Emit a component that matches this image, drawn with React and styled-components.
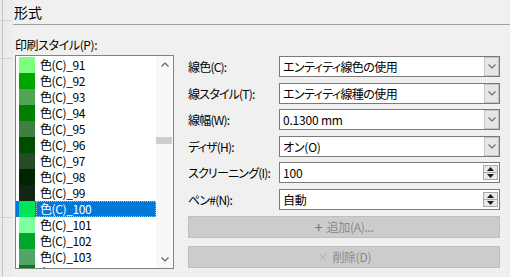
import React from 'react';
import styled, { createGlobalStyle } from 'styled-components';

const Global = createGlobalStyle`
  html, body { margin: 0; padding: 0; background: #f0f0f0; }
  body {
    font-family: "Noto Sans CJK JP", "Noto Sans", sans-serif;
    font-size: 12px;
    color: #000;
  }
  #root { width: 510px; height: 277px; overflow: hidden; }
`;

const Page = styled.div`
  display: flex;
  width: 510px;
  height: 277px;
  background: #f0f0f0;
  overflow: hidden;
  font-feature-settings: "palt";
`;

const Strip = styled.div`
  width: 13px;
  flex: none;
  background:
    linear-gradient(#c4c4c4, #c4c4c4) 2px 0 / 1px 100% no-repeat,
    linear-gradient(#d0d0d0, #d0d0d0) 0 20px / 12px 1px no-repeat,
    linear-gradient(#d0d0d0, #d0d0d0) 0 58px / 12px 1px no-repeat,
    linear-gradient(#d0d0d0, #d0d0d0) 0 217px / 12px 1px no-repeat,
    #ececec;
`;

const Main = styled.div`
  flex: 1;
  display: flex;
  flex-direction: column;
  min-width: 0;
`;

const Header = styled.div`
  height: 24px;
  line-height: 24px;
  font-size: 14px;
  padding-left: 1px;
  border-bottom: 1px solid #a0a0a0;
`;

const Body = styled.div`
  padding: 12px 0 0 2px;
  display: flex;
  flex-direction: column;
`;

const SectionLabel = styled.div`
  height: 16px;
  line-height: 16px;
  margin-bottom: 2px;
  letter-spacing: -0.4px;
`;

const Content = styled.div`
  display: flex;
  align-items: flex-start;
  gap: 14px;
`;

const ListBox = styled.div`
  width: 159px;
  height: 214px;
  box-sizing: border-box;
  border: 1px solid #828282;
  background: #fff;
  display: flex;
  overflow: hidden;
`;

const Items = styled.div`
  flex: 1;
  padding-top: 1px;
  overflow: hidden;
`;

const Item = styled.div`
  height: 16px;
  display: flex;
  align-items: stretch;
  background: ${p => (p.$selected ? '#0078d7' : 'transparent')};
  color: ${p => (p.$selected ? '#fff' : '#000')};
`;

const Swatch = styled.div`
  width: 16px;
  margin-left: 3px;
  flex: none;
`;

const ItemText = styled.div`
  flex: 1;
  margin-left: 1px;
  padding-left: 3px;
  line-height: 16px;
  letter-spacing: -0.4px;
  box-sizing: border-box;
  border: 1px dotted ${p => (p.$selected ? 'rgba(255,220,170,0.7)' : 'transparent')};
  display: flex;
  align-items: center;
`;

const ScrollBar = styled.div`
  width: 17px;
  flex: none;
  background: #f8f8f8;
  display: flex;
  flex-direction: column;
`;

const ScrollBtn = styled.div`
  height: 17px;
  display: flex;
  align-items: center;
  justify-content: center;
`;

const Track = styled.div`
  flex: 1;
`;

const Thumb = styled.div`
  height: 7px;
  margin: 64px 1px 0 0;
  background: #cdcdcd;
`;

const Form = styled.div`
  width: 312px;
  margin-top: 1px;
  display: flex;
  flex-direction: column;
  gap: 5.6px;
`;

const Row = styled.div`
  display: grid;
  grid-template-columns: 91px 1fr;
  align-items: center;
  height: 21px;
`;

const Label = styled.div`
  white-space: nowrap;
  letter-spacing: -0.8px;
`;

const Field = styled.div`
  height: 21px;
  box-sizing: border-box;
  border: 1px solid #7a7a7a;
  background: #fff;
  display: flex;
  align-items: stretch;
`;

const FieldText = styled.div`
  flex: 1;
  padding-left: 3px;
  display: flex;
  align-items: center;
  white-space: pre;
  letter-spacing: ${p => (p.$narrow ? '-0.6px' : '-0.2px')};
`;

const DropBtn = styled.div`
  width: 15px;
  box-sizing: border-box;
  border: 1px solid #c4c4c4;
  background: #e6e6e6;
  display: flex;
  align-items: center;
  justify-content: center;
`;

const SpinBox = styled.div`
  width: 15px;
  margin: 2px 1px 2px 0;
  box-sizing: border-box;
  border: 1px solid #a8a8a8;
  background: #e8e8e8;
  display: flex;
  flex-direction: column;
`;

const SpinHalf = styled.div`
  flex: 1;
  display: flex;
  align-items: center;
  justify-content: center;
  border-top: ${p => (p.$lower ? '1px solid #a8a8a8' : 'none')};
`;

const Buttons = styled.div`
  display: flex;
  flex-direction: column;
  gap: 8px;
  margin-top: 0.4px;
`;

const Button = styled.div`
  height: 22px;
  box-sizing: border-box;
  border: 1px solid #bfbfbf;
  background: #cccccc;
  color: #8a8a8a;
  letter-spacing: -0.3px;
  display: flex;
  align-items: center;
  justify-content: center;
  gap: 4px;
`;

const Glyph = styled.span`
  color: ${p => p.$color};
  font-size: ${p => p.$size}px;
  line-height: 1;
`;

const Chevron = ({ up, color = '#606060' }) => (
  <svg width="8" height="5" viewBox="0 0 8 5">
    <polyline
      points={up ? '0.5,4.5 4,1 7.5,4.5' : '0.5,0.5 4,4 7.5,0.5'}
      fill="none"
      stroke={color}
      strokeWidth="1.2"
    />
  </svg>
);

const Tri = ({ up }) => (
  <svg width="7" height="4" viewBox="0 0 7 4">
    <polygon points={up ? '0,4 3.5,0 7,4' : '0,0 3.5,4 7,0'} fill="#1a1a1a" />
  </svg>
);

const items = [
  ['91', 'rgb(127,255,127)'],
  ['92', 'rgb(0,165,0)'],
  ['93', 'rgb(82,165,82)'],
  ['94', 'rgb(0,127,0)'],
  ['95', 'rgb(63,127,63)'],
  ['96', 'rgb(0,76,0)'],
  ['97', 'rgb(38,76,38)'],
  ['98', 'rgb(0,38,0)'],
  ['99', 'rgb(19,38,19)'],
  ['100', 'rgb(0,230,90)'],
  ['101', 'rgb(127,255,159)'],
  ['102', 'rgb(0,165,41)'],
  ['103', 'rgb(82,165,103)'],
  ['104', 'rgb(0,127,31)'],
];

const combos = [
  ['線色(C):', 'エンティティ線色の使用', true],
  ['線スタイル(T):', 'エンティティ線種の使用', true],
  ['線幅(W):', '0.1300 mm', false],
  ['ディザ(H):', 'オン(O)', false],
];

const spins = [
  ['スクリーニング(I):', '100'],
  ['ペン#(N):', '自動'],
];

export default function App() {
  return (
    <>
      <Global />
      <Page>
        <Strip />
        <Main>
          <Header>形式</Header>
          <Body>
            <SectionLabel>印刷スタイル(P):</SectionLabel>
            <Content>
              <ListBox>
                <Items>
                  {items.map(([n, c]) => {
                    const sel = n === '100';
                    return (
                      <Item key={n} $selected={sel}>
                        <Swatch style={{ background: c }} />
                        <ItemText $selected={sel}>色(C)_{n}</ItemText>
                      </Item>
                    );
                  })}
                </Items>
                <ScrollBar>
                  <ScrollBtn><Chevron up /></ScrollBtn>
                  <Track><Thumb /></Track>
                  <ScrollBtn><Chevron /></ScrollBtn>
                </ScrollBar>
              </ListBox>
              <Form>
                {combos.map(([l, v, narrow]) => (
                  <Row key={l}>
                    <Label>{l}</Label>
                    <Field>
                      <FieldText $narrow={narrow}>{v}</FieldText>
                      <DropBtn><Chevron color="#707070" /></DropBtn>
                    </Field>
                  </Row>
                ))}
                {spins.map(([l, v]) => (
                  <Row key={l}>
                    <Label>{l}</Label>
                    <Field>
                      <FieldText>{v}</FieldText>
                      <SpinBox>
                        <SpinHalf><Tri up /></SpinHalf>
                        <SpinHalf $lower><Tri /></SpinHalf>
                      </SpinBox>
                    </Field>
                  </Row>
                ))}
                <Buttons>
                  <Button>
                    <Glyph $color="#7a7a7a" $size={15}>+</Glyph>
                    <span>追加(A)...</span>
                  </Button>
                  <Button>
                    <Glyph $color="#b4b4b4" $size={12}>×</Glyph>
                    <span>削除(D)</span>
                  </Button>
                </Buttons>
              </Form>
            </Content>
          </Body>
        </Main>
      </Page>
    </>
  );
}
